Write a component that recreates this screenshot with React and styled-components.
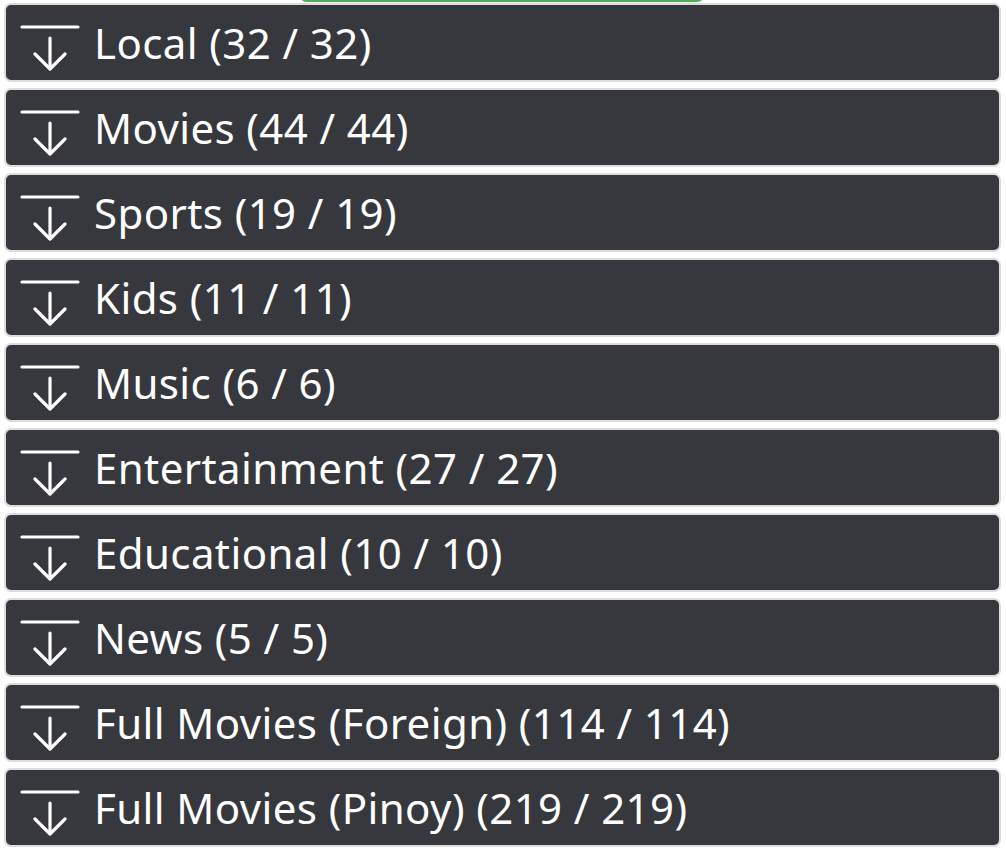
import React from "react";
import styled, { createGlobalStyle } from "styled-components";

const Global = createGlobalStyle`
  html, body { margin: 0; padding: 0; background: #ffffff; }
  body { font-family: "Noto Sans", "Open Sans", sans-serif; }
`;

const Page = styled.div`
  position: relative;
  width: 1006px;
  height: 865px;
  overflow: hidden;
  background: #fff;
`;

const TopButtonEdge = styled.div`
  position: absolute;
  top: -10px;
  left: 299px;
  width: 406px;
  height: 12px;
  background: #4caf50;
  border-radius: 0 0 8px 8px;
`;

const List = styled.div`
  display: flex;
  flex-direction: column;
  gap: 6px;
  padding: 3px 5px 0 4px;
`;

const Row = styled.button`
  display: flex;
  align-items: center;
  gap: 14px;
  height: 79px;
  box-sizing: border-box;
  padding: 0 0 0 14px;
  background: #36383e;
  border: 2px solid #dcdcdc;
  border-radius: 7px;
  color: #ffffff;
  font-family: "Noto Sans", "Open Sans", sans-serif;
  font-size: 42px;
  letter-spacing: 0.4px;
  text-align: left;
  cursor: pointer;
`;

const Label = styled.span`
  line-height: 1;
  white-space: nowrap;
  margin-top: 1px;
`;

const IconBox = styled.svg`
  flex: none;
  margin-top: 10px;
`;

const ExpandIcon = () => (
  <IconBox width="60" height="46" viewBox="0 0 60 46" fill="none" stroke="#fff"
    strokeWidth="3.2" strokeLinecap="round" strokeLinejoin="round">
    <line x1="2" y1="2" x2="58" y2="2" />
    <line x1="30" y1="13" x2="30" y2="43" />
    <polyline points="15,29 30,44 45,29" />
  </IconBox>
);

const categories = [
  ["Local", 32],
  ["Movies", 44],
  ["Sports", 19],
  ["Kids", 11],
  ["Music", 6],
  ["Entertainment", 27],
  ["Educational", 10],
  ["News", 5],
  ["Full Movies (Foreign)", 114],
  ["Full Movies (Pinoy)", 219],
];

export default function App() {
  return (
    <Page>
      <Global />
      <TopButtonEdge />
      <List>
        {categories.map(([name, n]) => (
          <Row key={name}>
            <ExpandIcon />
            <Label>{`${name} (${n} / ${n})`}</Label>
          </Row>
        ))}
      </List>
    </Page>
  );
}
